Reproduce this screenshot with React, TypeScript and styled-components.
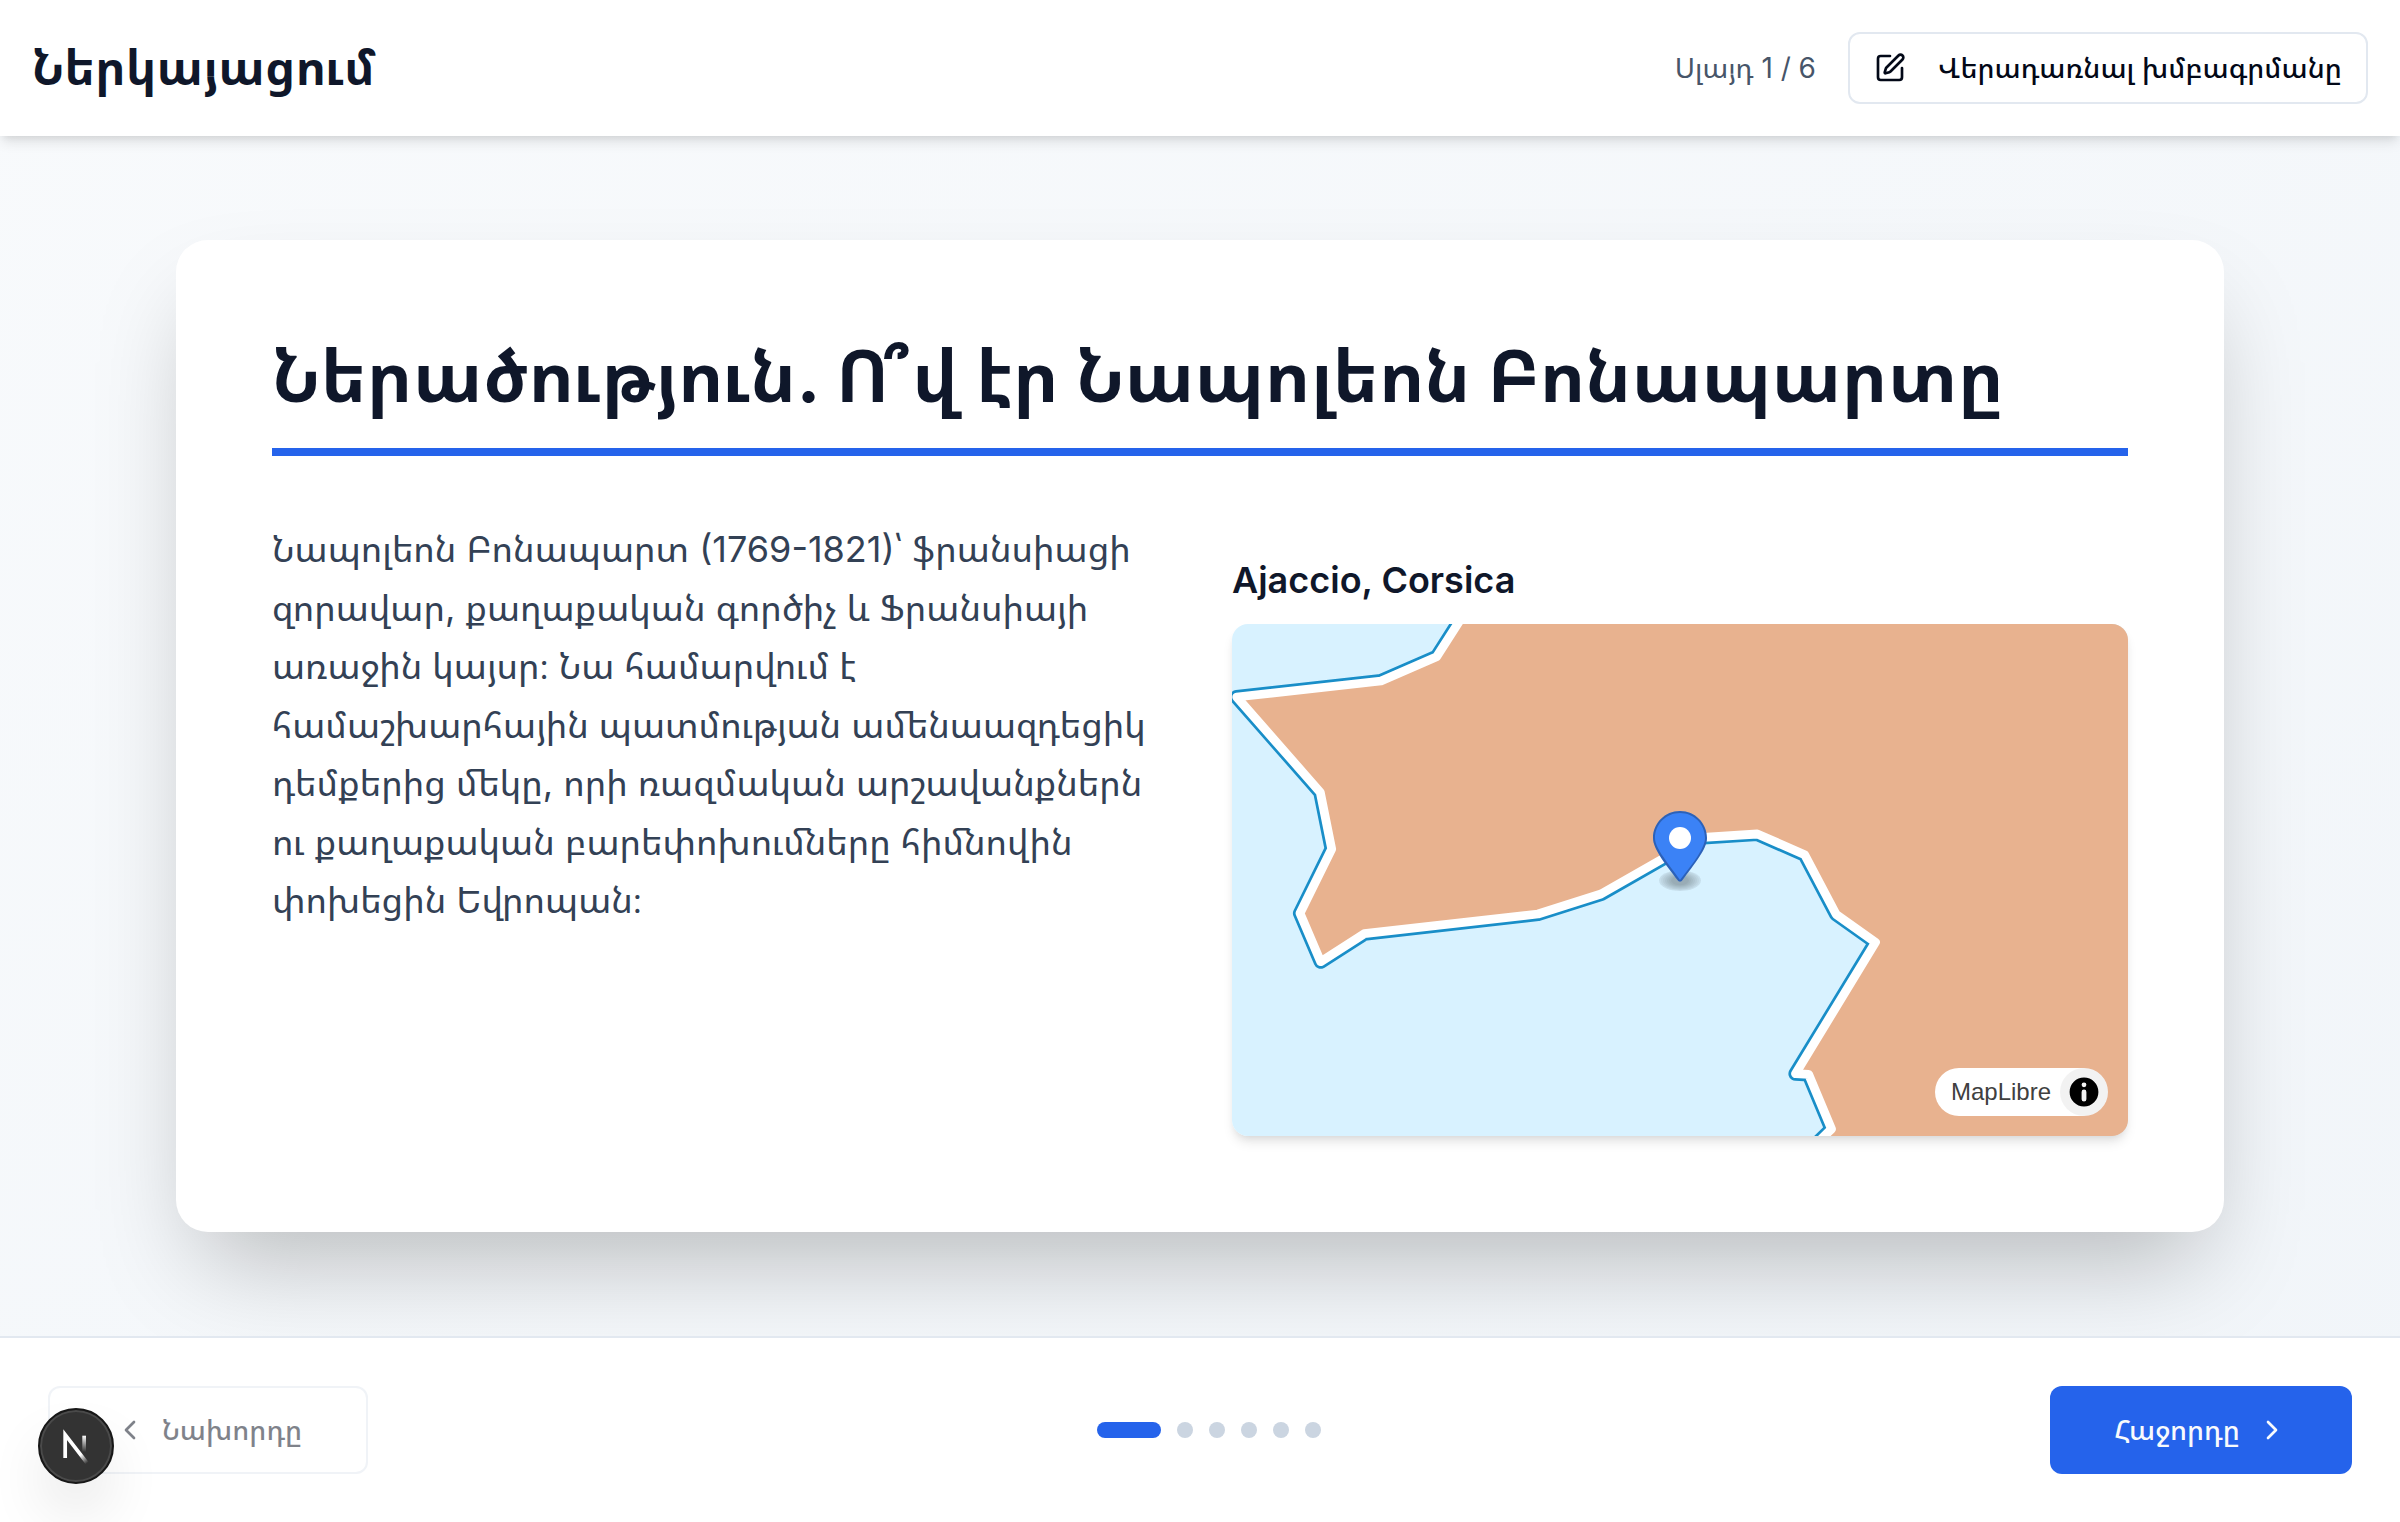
import React from "react";
import styled, { createGlobalStyle } from "styled-components";

const GlobalStyle = createGlobalStyle`
  *, *::before, *::after { box-sizing: border-box; }
  html, body { margin: 0; padding: 0; }
  body {
    font-family: Inter, "Noto Sans Armenian", "Noto Sans", "DejaVu Sans", sans-serif;
    color: #020817;
    background: #ffffff;
    overflow: hidden;
  }
  h1, h2, h3, p { margin: 0; }
`;

const Page = styled.div`
  height: 100vh;
  display: flex;
  flex-direction: column;
  background: linear-gradient(to bottom right, #f8fafc, #f1f5f9);
`;

const Header = styled.header`
  position: relative;
  z-index: 1;
  flex: none;
  height: 136px;
  padding: 0 32px;
  display: flex;
  align-items: center;
  justify-content: space-between;
  background: #ffffff;
  box-shadow: 0 8px 12px -2px rgba(0, 0, 0, 0.1), 0 4px 8px -4px rgba(0, 0, 0, 0.1);
`;

const Brand = styled.h1`
  font-size: 48px;
  line-height: 64px;
  font-weight: 700;
  color: #0f172a;
`;

const HeaderActions = styled.div`
  display: flex;
  align-items: center;
  gap: 32px;
`;

const Counter = styled.span`
  font-size: 28px;
  line-height: 40px;
  color: #475569;
`;

const Button = styled.button<{
  $variant: "outline" | "primary";
  $width: number;
  $height: number;
  $gap?: number;
}>`
  width: ${(p) => p.$width}px;
  height: ${(p) => p.$height}px;
  display: flex;
  align-items: center;
  justify-content: center;
  gap: ${(p) => p.$gap ?? 16}px;
  border-radius: 12px;
  border: ${(p) => (p.$variant === "outline" ? "2px solid #e2e8f0" : "0")};
  background: ${(p) => (p.$variant === "outline" ? "#ffffff" : "#2563eb")};
  color: ${(p) => (p.$variant === "outline" ? "#020817" : "#f8fafc")};
  font-family: inherit;
  font-size: 28px;
  line-height: 40px;
  font-weight: 500;
  white-space: nowrap;
  padding: 0;
  &:disabled { opacity: 0.5; }
`;

const Stage = styled.main`
  flex: 1;
  min-height: 0;
  display: flex;
  align-items: center;
  justify-content: center;
  overflow: hidden;
`;

const Card = styled.article`
  width: 2048px;
  height: 992px;
  padding: 96px;
  border-radius: 32px;
  background: #ffffff;
  box-shadow: 0 50px 100px -24px rgba(0, 0, 0, 0.25);
`;

const Title = styled.h2`
  padding-bottom: 32px;
  border-bottom: 8px solid #2563eb;
  margin-bottom: 64px;
  font-size: 72px;
  line-height: 80px;
  font-weight: 700;
  color: #0f172a;
  white-space: nowrap;
`;

const Kerned = styled.span`
  margin-left: 1px;
  letter-spacing: -9px;
`;

const Columns = styled.div`
  display: grid;
  grid-template-columns: 896px 896px;
  gap: 64px;
`;

const Body = styled.p`
  font-size: 36px;
  line-height: 58.5px;
  color: #334155;
`;

const Line = styled.span`
  display: block;
  white-space: nowrap;
`;

const Figure = styled.section`
  padding-top: 32px;
`;

const Place = styled.h3`
  margin-bottom: 16px;
  font-size: 36px;
  line-height: 56px;
  font-weight: 600;
  color: #0f172a;
`;

const MapFrame = styled.div`
  position: relative;
  height: 512px;
  border-radius: 16px;
  overflow: hidden;
  background: #d8f2ff;
`;

const MapShadow = styled.div`
  border-radius: 16px;
  box-shadow: 0 8px 12px -2px rgba(0, 0, 0, 0.1), 0 4px 8px -4px rgba(0, 0, 0, 0.1);
`;

const MapCanvas = styled.svg`
  display: block;
  width: 896px;
  height: 512px;
`;

const Marker = styled.svg`
  position: absolute;
  left: 421px;
  top: 187px;
  width: 54px;
  height: 82px;
`;

const Attribution = styled.div`
  position: absolute;
  right: 20px;
  bottom: 20px;
  height: 48px;
  padding-left: 16px;
  display: flex;
  align-items: center;
  gap: 9px;
  border-radius: 24px;
  background: #ffffff;
  color: #404040;
  font: 24px/40px "Liberation Sans", Arial, sans-serif;
`;

const InfoBadge = styled.span`
  display: flex;
  width: 48px;
  height: 48px;
  border-radius: 50%;
  background: rgba(0, 0, 0, 0.05);
`;

const Footer = styled.footer`
  flex: none;
  height: 186px;
  padding: 48px;
  display: flex;
  align-items: center;
  justify-content: space-between;
  border-top: 2px solid #e2e8f0;
  background: #ffffff;
`;

const Dots = styled.div`
  display: flex;
  gap: 16px;
`;

const Dot = styled.span<{ $active?: boolean }>`
  width: ${(p) => (p.$active ? 64 : 16)}px;
  height: 16px;
  border-radius: 8px;
  background: ${(p) => (p.$active ? "#2563eb" : "#cbd5e1")};
`;

const DevBadge = styled.div`
  position: fixed;
  left: 38px;
  top: 1408px;
  z-index: 2;
  width: 76px;
  height: 76px;
  border: 2px solid #171717;
  border-radius: 50%;
  background: #333333;
  box-shadow: inset 0 0 0 2px #4a4a4a, 0 32px 64px -16px rgba(0, 0, 0, 0.24);
`;

const DevLogo = styled.svg`
  position: absolute;
  left: -2px;
  top: -2px;
  width: 76px;
  height: 76px;
`;

const Glyph = styled.svg<{ $size: number }>`
  flex: none;
  width: ${(p) => p.$size}px;
  height: ${(p) => p.$size}px;
  fill: none;
  stroke: currentColor;
  stroke-width: 2;
  stroke-linecap: round;
  stroke-linejoin: round;
`;

const COAST =
  "M232,-10 L204.7,32.7 149,57 4.7,73 88.3,168.3 99.7,225 68,289.3 88.7,337.7 132.3,309.7 306,290 369,270 467.6,213.7 525.3,210 572.7,230.7 604.1,290.3 643.5,318.3 563.5,449.7 576.6,450.3 599.5,505 578,526";

const BODY_LINES = [
  "Նապոլեոն Բոնապարտ (1769-1821)՝ ֆրանսիացի",
  "զորավար, քաղաքական գործիչ և Ֆրանսիայի",
  "առաջին կայսր։ Նա համարվում է",
  "համաշխարհային պատմության ամենաազդեցիկ",
  "դեմքերից մեկը, որի ռազմական արշավանքներն",
  "ու քաղաքական բարեփոխումները հիմնովին",
  "փոխեցին Եվրոպան։",
];

const SHADOW_RINGS = [
  [10.5, 5.25],
  [10.5, 5.25],
  [9.5, 4.77],
  [8.5, 4.29],
  [7.5, 3.82],
  [6.5, 3.34],
  [5.5, 2.86],
  [4.5, 2.38],
];

function PlaceMap() {
  return (
    <MapShadow>
      <MapFrame>
        <MapCanvas viewBox="0 0 896 512">
          <path d={COAST} fill="none" stroke="#198ec8" strokeWidth="14.2" strokeLinejoin="round" />
          <path d={`${COAST} L578,560 920,560 920,-20 232,-20 Z`} fill="#e8b28f" />
          <path d={COAST} fill="none" stroke="#ffffff" strokeWidth="8.8" strokeLinejoin="round" />
        </MapCanvas>
        <Marker viewBox="0 0 27 41">
          <g transform="translate(3 29)">
            {SHADOW_RINGS.map(([rx, ry], i) => (
              <ellipse key={i} opacity="0.04" cx="10.5" cy="5.8" rx={rx} ry={ry} />
            ))}
          </g>
          <path
            fill="#3b82f6"
            d="M27,13.5 C27,19.07 20.25,27 14.75,34.5 C14.02,35.5 12.98,35.5 12.25,34.5 C6.75,27 0,19.22 0,13.5 C0,6.04 6.04,0 13.5,0 C20.96,0 27,6.04 27,13.5 Z"
          />
          <path
            opacity="0.25"
            d="M13.5,0 C6.04,0 0,6.04 0,13.5 C0,19.22 6.75,27 12.25,34.5 C13,35.52 14.02,35.5 14.75,34.5 C20.25,27 27,19.07 27,13.5 C27,6.04 20.96,0 13.5,0 Z M13.5,1 C20.42,1 26,6.58 26,13.5 C26,15.9 24.5,19.18 22.22,22.74 C19.95,26.3 16.71,30.14 13.94,33.91 C13.74,34.18 13.61,34.32 13.5,34.44 C13.39,34.32 13.26,34.18 13.06,33.91 C10.28,30.13 7.41,26.31 5.02,22.77 C2.62,19.23 1,15.95 1,13.5 C1,6.58 6.58,1 13.5,1 Z"
          />
          <circle cx="13.5" cy="13.5" r="5.5" fill="#ffffff" />
        </Marker>
        <Attribution>
          MapLibre
          <InfoBadge>
            <svg viewBox="0 0 20 20" width="48" height="48" fillRule="evenodd">
              <path d="M4 10a6 6 0 1 0 12 0 6 6 0 1 0-12 0m5-3a1 1 0 1 0 2 0 1 1 0 1 0-2 0m0 3a1 1 0 1 1 2 0v3a1 1 0 1 1-2 0" />
            </svg>
          </InfoBadge>
        </Attribution>
      </MapFrame>
    </MapShadow>
  );
}

export default function App() {
  return (
    <Page>
      <GlobalStyle />
      <Header>
        <Brand>Ներկայացում</Brand>
        <HeaderActions>
          <Counter>Սլայդ 1 / 6</Counter>
          <Button $variant="outline" $width={520} $height={72} $gap={32}>
            <Glyph $size={32} viewBox="0 0 24 24">
              <path d="M12 3H5a2 2 0 0 0-2 2v14a2 2 0 0 0 2 2h14a2 2 0 0 0 2-2v-7" />
              <path d="M18.375 2.625a1 1 0 0 1 3 3l-9.013 9.014a2 2 0 0 1-.853.505l-2.873.84a.5.5 0 0 1-.62-.62l.84-2.873a2 2 0 0 1 .506-.852z" />
            </Glyph>
            Վերադառնալ խմբագրմանը
          </Button>
        </HeaderActions>
      </Header>
      <Stage>
        <Card>
          <Title>
            Ներածություն. <Kerned>Ո</Kerned>՞վ էր Նապոլեոն Բոնապարտը
          </Title>
          <Columns>
            <Body>
              {BODY_LINES.map((line) => (
                <Line key={line}>{line}</Line>
              ))}
            </Body>
            <Figure>
              <Place>Ajaccio, Corsica</Place>
              <PlaceMap />
            </Figure>
          </Columns>
        </Card>
      </Stage>
      <Footer>
        <Button $variant="outline" $width={320} $height={88} disabled>
          <Glyph $size={32} viewBox="0 0 24 24">
            <path d="m15 18-6-6 6-6" />
          </Glyph>
          Նախորդը
        </Button>
        <Dots>
          <Dot $active />
          <Dot />
          <Dot />
          <Dot />
          <Dot />
          <Dot />
        </Dots>
        <Button $variant="primary" $width={302} $height={88}>
          Հաջորդը
          <Glyph $size={32} viewBox="0 0 24 24">
            <path d="m9 18 6-6-6-6" />
          </Glyph>
        </Button>
      </Footer>
      <DevBadge>
        <DevLogo viewBox="0 0 38 38" fill="none">
          <g transform="translate(11.25 12.35)" strokeWidth="1.86">
            <path d="M13.3 15.2 L2.34 1 V12.6" stroke="url(#diag)" />
            <path d="M11.825 1.5 V13.1" stroke="url(#stem)" />
          </g>
          <defs>
            <linearGradient id="diag" x1="9.956" y1="11.123" x2="15.478" y2="17.967" gradientUnits="userSpaceOnUse">
              <stop stopColor="white" />
              <stop offset="0.604" stopColor="white" stopOpacity="0" />
              <stop offset="1" stopColor="white" stopOpacity="0" />
            </linearGradient>
            <linearGradient id="stem" x1="11.822" y1="1.4" x2="11.792" y2="9.625" gradientUnits="userSpaceOnUse">
              <stop stopColor="white" />
              <stop offset="1" stopColor="white" stopOpacity="0" />
            </linearGradient>
          </defs>
        </DevLogo>
      </DevBadge>
    </Page>
  );
}
